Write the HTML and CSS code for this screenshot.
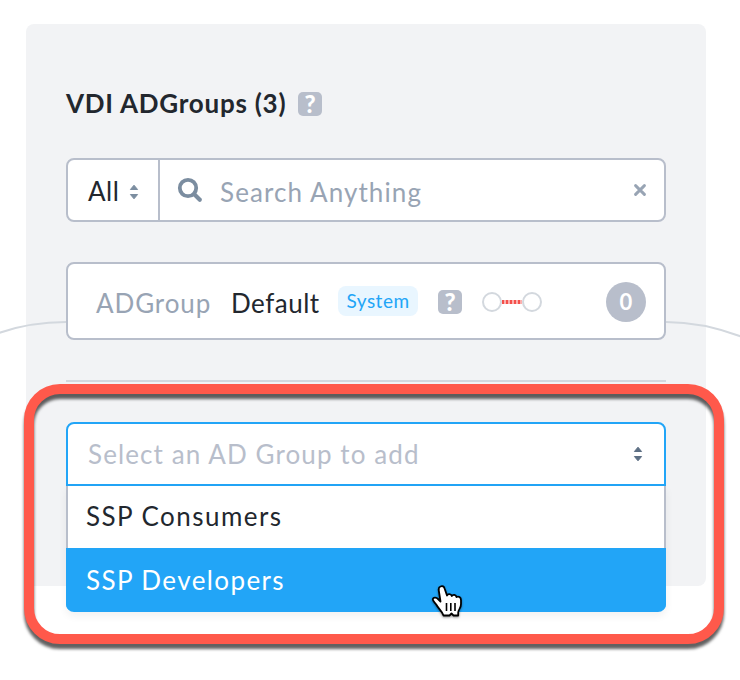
FILE: index.html
```html
<!DOCTYPE html>
<html lang="en">
<head>
<meta charset="utf-8">
<title>VDI ADGroups</title>
<link rel="stylesheet" href="styles.css">
</head>
<body>
<main class="panel">
  <header class="heading">
    <h1 class="title">VDI ADGroups (3)</h1>
    <span class="help">?</span>
  </header>

  <div class="search">
    <div class="filter">
      <span class="filter-label">All</span>
      <svg class="sorter" width="10" height="16" viewBox="0 0 10 16"><path d="M5 1.200 8.600 5.500H1.400ZM5 14.800 1.400 10.500H8.600Z" fill="currentColor" stroke="currentColor" stroke-width="1" stroke-linejoin="round"/></svg>
    </div>
    <div class="query">
      <svg class="lens" width="26" height="26" viewBox="0 0 26 26" fill="none" stroke="currentColor"><circle cx="11" cy="11" r="8.200" stroke-width="3.800"/><path d="m17.300 17.300 5.500 5.500" stroke-width="4.200" stroke-linecap="round"/></svg>
      <span class="placeholder">Search Anything</span>
      <svg class="clear" width="12" height="12" viewBox="0 0 12 12"><path d="m1.600 1.600 8.800 8.800m0-8.800-8.800 8.800" stroke="currentColor" stroke-width="2.900" stroke-linecap="round"/></svg>
    </div>
  </div>

  <div class="group">
    <span class="kind">ADGroup</span>
    <span class="name">Default</span>
    <span class="tag">System</span>
    <span class="help">?</span>
    <svg class="link" width="60" height="20" viewBox="0 0 60 20" fill="none"><path d="M20 10h20" stroke="#fbb0ae" stroke-width="4"/><path d="M20 10h20" stroke="#f4504b" stroke-width="4" stroke-dasharray="2 2"/><circle cx="10" cy="10" r="9" stroke="#d3d8de" stroke-width="2"/><circle cx="50" cy="10" r="9" stroke="#d3d8de" stroke-width="2"/></svg>
    <span class="count">0</span>
  </div>

  <hr class="divider">

  <div class="select">
    <span class="select-label">Select an AD Group to add</span>
    <svg class="sorter sorter-dark" width="10" height="16" viewBox="0 0 10 16"><path d="M5 1.200 8.600 5.500H1.400ZM5 14.800 1.400 10.500H8.600Z" fill="currentColor" stroke="currentColor" stroke-width="1" stroke-linejoin="round"/></svg>
    <ul class="menu">
      <li class="option"><span class="consumers">SSP Consumers</span></li>
      <li class="option active"><span class="developers">SSP Developers</span></li>
    </ul>
  </div>
</main>

<svg class="wires" width="740" height="680" viewBox="0 0 740 680" fill="none" stroke="#d3d8de" stroke-width="2"><path d="M-1 333Q30 322 66 322M666 322Q702 322 741 336.500"/></svg>
<div class="callout"></div>
<svg class="pointer" width="38" height="42" viewBox="0 0 38 42"><path d="M10.500 5.500C12.500 4.600 14 5.500 14.600 7.500L17 14.500C17.500 12.600 21 12.500 21.800 15C23 13.200 26 13.600 26.500 16C28.500 14.800 31 16.300 31 19V23C31 28 28.300 28 28.200 31.500V34.500H23.500L21.500 32.500L19.500 34.500H13.500C12.500 30.500 8.500 28 6.200 23.500C5 21.500 2.500 20 2.800 18C3.500 16 6.500 16.500 8 18L10.500 20.500L8.700 9C8.500 7 8.800 6.100 10.500 5.500Z" fill="#fff" stroke="#000" stroke-width="1.800" stroke-linejoin="round"/><path d="M16.500 22v8M20.800 22v8M25 22v8" stroke="#000" stroke-width="1.600"/></svg>
</body>
</html>
```
FILE: styles.css
```css
* { box-sizing: border-box; }
body {
  margin: 0;
  position: relative;
  width: 740px;
  height: 680px;
  padding-top: 0.1px;
  overflow: hidden;
  background: #fff;
  color: #22272e;
  font: 400 26px/32px Lato, "Liberation Sans", sans-serif;
  white-space: nowrap;
}
.panel {
  width: 680px;
  height: 562px;
  margin: 24px 0 0 26px;
  padding: 60px 40px 0;
  border-radius: 8px;
  background: #f2f3f5;
}
.heading { display: flex; align-items: center; gap: 9px; height: 40px; }
.title { width: 223px; margin: 0; padding-bottom: 3px; font-size: 26px; font-weight: 700; line-height: 36px; letter-spacing: 0.75px; }
.help {
  width: 24px;
  height: 24px;
  border-radius: 5px;
  background: #b8becb;
  color: #fff;
  font-size: 24px;
  font-weight: 900;
  line-height: 24px;
  text-align: center;
}
.search, .group, .select {
  position: relative;
  display: flex;
  align-items: center;
  border: 2px solid #b8becb;
  border-radius: 8px;
  background: #fff;
}
.search { height: 64px; margin-top: 34px; }
.filter { display: flex; align-items: center; width: 92px; height: 60px; padding-left: 20px; border-right: 2px solid #b8becb; }
.filter-label { width: 41px; padding-top: 2px; letter-spacing: 0.5px; }
.filter .sorter { margin-top: 4px; }
.sorter { color: #7b8da0; }
.sorter-dark { color: #5d6f84; }
.query { display: flex; flex: 1; align-items: center; padding: 0 18px 0 17px; }
.lens { color: #7b8da0; margin-right: 17px; }
.placeholder { flex: 1; padding-top: 4px; color: #98a4b4; letter-spacing: 1.1px; }
.clear { color: #98a4b4; }
.group { height: 78px; margin-top: 40px; padding: 2px 18px 0 28px; }
.kind { width: 135px; padding-top: 1px; color: #98a4b4; letter-spacing: 0.9px; }
.name { width: 107px; padding-top: 1px; letter-spacing: 0.5px; }
.tag { width: 80px; height: 30px; margin: -2px 20px 0 0; border-radius: 8px; background: #e9f6ff; color: #22a5f7; font-size: 19px; line-height: 30px; text-align: center; letter-spacing: 0.5px; }
.link { margin-left: 20px; }
.count { width: 40px; height: 40px; margin-left: auto; border-radius: 50%; background: #b8becb; color: #fff; font-size: 22px; font-weight: 700; line-height: 40px; text-align: center; }
.divider { height: 2px; margin: 40px 0; border: 0; background: #d3d8de; }
.select { height: 64px; padding: 0 21px 0 20px; border-color: #22a5f7; border-radius: 8px 8px 0 0; justify-content: space-between; }
.select-label { color: #b8becb; letter-spacing: 1.1px; }
.menu {
  position: absolute;
  top: 62px;
  left: -2px;
  width: 600px;
  margin: 0;
  padding: 0;
  list-style: none;
  border-radius: 0 0 8px 8px;
  box-shadow: 0 4px 8px rgba(0, 0, 0, 0.06);
  overflow: hidden;
}
.option { height: 62px; padding-left: 18px; border: solid #b8becb; border-width: 0 2px; background: #fff; line-height: 61px; }
.active { height: 64px; border-color: #22a5f7; background: #22a5f7; color: #fff; line-height: 65px; }
.consumers { letter-spacing: 1.45px; }
.developers { letter-spacing: 1.4px; }
.wires { position: absolute; top: 0; left: 0; }
.callout {
  position: absolute;
  top: 384px;
  left: 24px;
  width: 700px;
  height: 260px;
  border: 10px solid #ff594b;
  border-radius: 36px;
  filter: drop-shadow(0 5px 1.5px rgba(0, 0, 0, 0.62));
}
.pointer { position: absolute; top: 581px; left: 430px; filter: drop-shadow(0 1px 1px rgba(0, 0, 0, 0.4)); }
```
